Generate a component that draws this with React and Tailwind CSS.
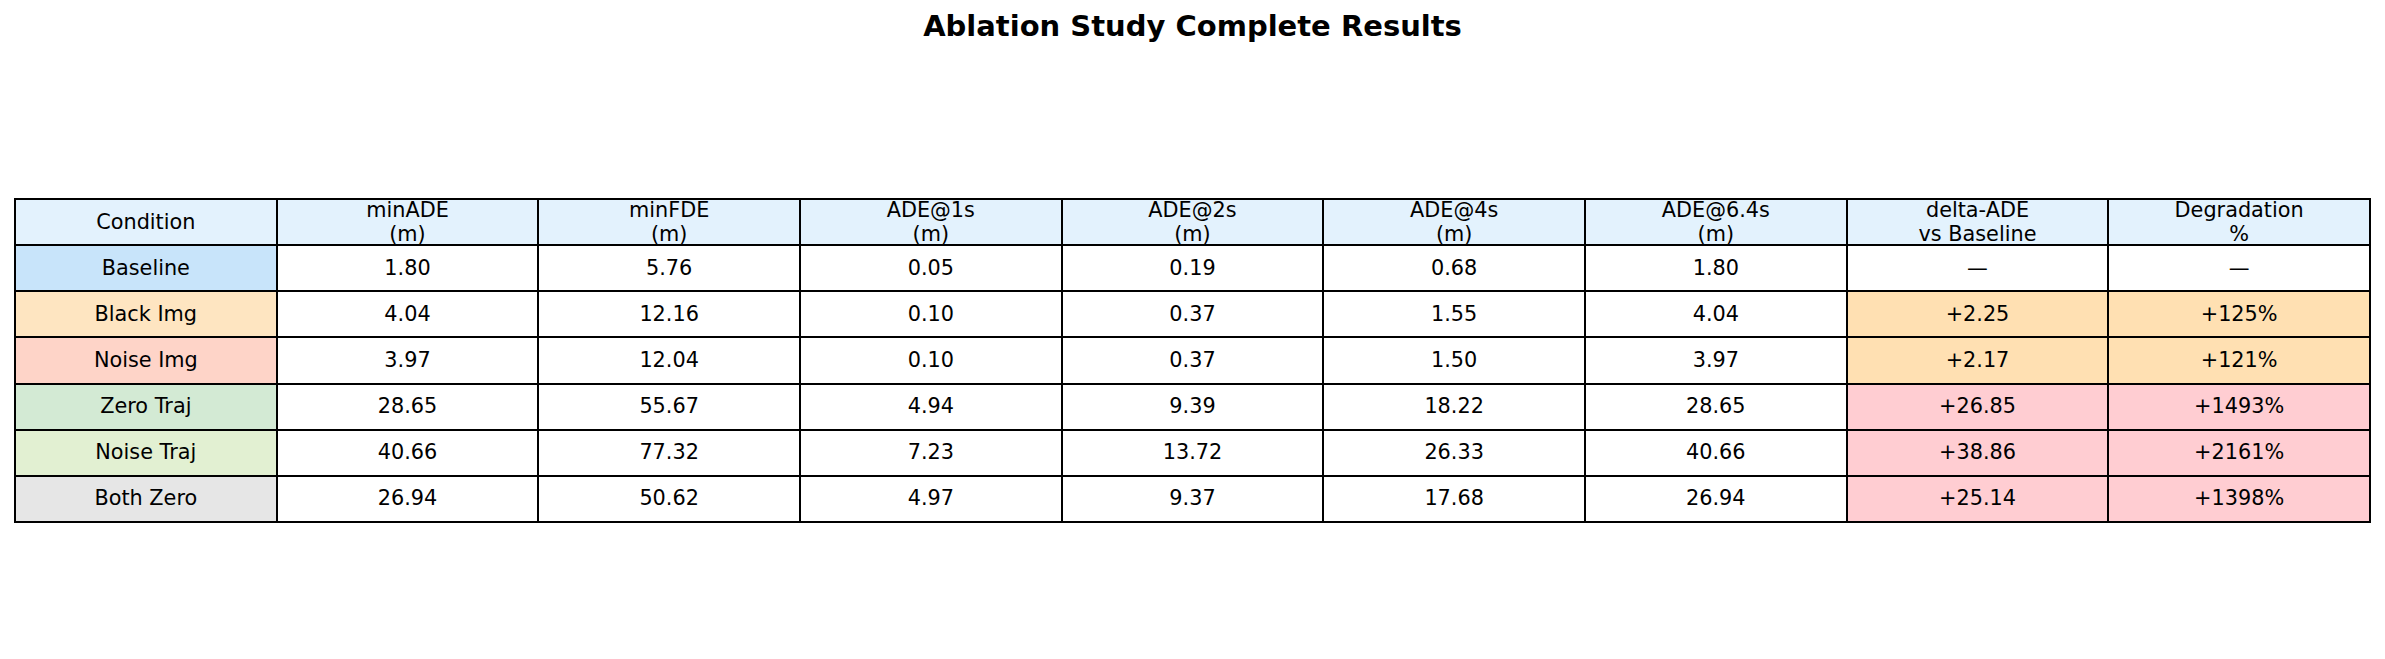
import { Fragment } from "react";

const HEADERS = [
  ["Condition"],
  ["minADE", "(m)"],
  ["minFDE", "(m)"],
  ["ADE@1s", "(m)"],
  ["ADE@2s", "(m)"],
  ["ADE@4s", "(m)"],
  ["ADE@6.4s", "(m)"],
  ["delta-ADE", "vs Baseline"],
  ["Degradation", "%"],
];

const ROWS = [
  { name: "Baseline", bg: "bg-[#c8e4fa]", hl: "", values: ["1.80", "5.76", "0.05", "0.19", "0.68", "1.80", "—", "—"] },
  { name: "Black Img", bg: "bg-[#fee5c1]", hl: "bg-[#ffe0b2]", values: ["4.04", "12.16", "0.10", "0.37", "1.55", "4.04", "+2.25", "+125%"] },
  { name: "Noise Img", bg: "bg-[#fed4c8]", hl: "bg-[#ffe0b2]", values: ["3.97", "12.04", "0.10", "0.37", "1.50", "3.97", "+2.17", "+121%"] },
  { name: "Zero Traj", bg: "bg-[#d3ead4]", hl: "bg-[#ffcdd2]", values: ["28.65", "55.67", "4.94", "9.39", "18.22", "28.65", "+26.85", "+1493%"] },
  { name: "Noise Traj", bg: "bg-[#e2f0d2]", hl: "bg-[#ffcdd2]", values: ["40.66", "77.32", "7.23", "13.72", "26.33", "40.66", "+38.86", "+2161%"] },
  { name: "Both Zero", bg: "bg-[#e6e6e6]", hl: "bg-[#ffcdd2]", values: ["26.94", "50.62", "4.97", "9.37", "17.68", "26.94", "+25.14", "+1398%"] },
];

function Cell({ className = "", children }) {
  return (
    <div className={`flex flex-col items-center justify-center overflow-visible text-center ${className}`}>
      {children}
    </div>
  );
}

export default function App() {
  return (
    <div className="min-h-[659px] w-[2385px] bg-white text-black font-['DejaVu_Sans',sans-serif]">
      <h1 className="pt-[9px] text-center text-[29px] font-bold leading-[34px]">
        Ablation Study Complete Results
      </h1>

      {/* table: black grid background shows through the 2px gaps as cell borders */}
      <div className="mx-[14px] mt-[155px] grid h-[325px] w-[2357px] grid-cols-9 grid-rows-7 gap-[2px] bg-black p-[2px] text-[20.8px]">
        {HEADERS.map((lines, i) => (
          <Cell key={i} className="bg-[#e3f2fd] leading-[24px]">
            {lines.map((l) => (
              <span key={l}>{l}</span>
            ))}
          </Cell>
        ))}

        {ROWS.map((r) => (
          <Fragment key={r.name}>
            <Cell className={r.bg}>{r.name}</Cell>
            {r.values.map((v, j) => (
              <Cell key={j} className={j >= 6 && r.hl ? r.hl : "bg-white"}>
                {v}
              </Cell>
            ))}
          </Fragment>
        ))}
      </div>
    </div>
  );
}
